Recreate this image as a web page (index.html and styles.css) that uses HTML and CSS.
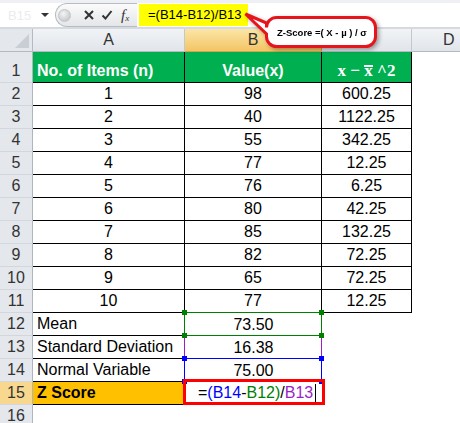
FILE: index.html
```html
<!DOCTYPE html>
<html lang="en">
  <head>
    <title>Z Score</title>
    <meta name="viewport" content="width=device-width, initial-scale=1.0">
    <link rel="stylesheet" href="styles.css">
  </head>
  <body>
    <div class="formula-bar">
      <div class="name-box"><span class="name">B15</span><span class="drop"></span></div>
      <div class="buttons">
        <span class="knob"></span>
        <svg class="icon" viewBox="0 0 12 12"><path d="M2 2L10 10M10 2L2 10" /></svg>
        <svg class="icon" viewBox="0 0 12 12"><path d="M1.5 6.5L4.5 9.5L10.5 2" /></svg>
        <span class="fx">f<sub>x</sub></span>
      </div>
      <div class="formula">=(B14-B12)/B13</div>
      <div class="rest"></div>
    </div>
    <div class="band"></div>

    <div class="sheet">
      <div class="corner"></div>
      <div class="col">A</div>
      <div class="col sel">B</div>
      <div class="col"></div>
      <div class="col last">D</div>

      <div class="rh">1</div>
      <div class="c head left">No. of Items (n)</div>
      <div class="c head">Value(x)</div>
      <div class="c head math">x &minus; <span class="bar">x</span> ^2</div>
      <div class="e"></div>

      <div class="rh">2</div><div class="c">1</div><div class="c">98</div><div class="c">600.25</div><div class="e"></div>
      <div class="rh">3</div><div class="c">2</div><div class="c">40</div><div class="c">1122.25</div><div class="e"></div>
      <div class="rh">4</div><div class="c">3</div><div class="c">55</div><div class="c">342.25</div><div class="e"></div>
      <div class="rh">5</div><div class="c">4</div><div class="c">77</div><div class="c">12.25</div><div class="e"></div>
      <div class="rh">6</div><div class="c">5</div><div class="c">76</div><div class="c">6.25</div><div class="e"></div>
      <div class="rh">7</div><div class="c">6</div><div class="c">80</div><div class="c">42.25</div><div class="e"></div>
      <div class="rh">8</div><div class="c">7</div><div class="c">85</div><div class="c">132.25</div><div class="e"></div>
      <div class="rh">9</div><div class="c">8</div><div class="c">82</div><div class="c">72.25</div><div class="e"></div>
      <div class="rh">10</div><div class="c">9</div><div class="c">65</div><div class="c">72.25</div><div class="e"></div>
      <div class="rh">11</div><div class="c">10</div><div class="c">77</div><div class="c">12.25</div><div class="e"></div>

      <div class="rh">12</div><div class="c left">Mean</div><div class="c ref green">73.50</div><div class="e"></div><div class="e"></div>
      <div class="rh">13</div><div class="c left">Standard Deviation</div><div class="c ref purple">16.38</div><div class="e"></div><div class="e"></div>
      <div class="rh">14</div><div class="c left">Normal Variable</div><div class="c ref blue">75.00</div><div class="e"></div><div class="e"></div>
      <div class="rh sel">15</div>
      <div class="c left gold">Z Score</div>
      <div class="c edit">=<span class="t-blue">(B14</span>-<span class="t-green">B12)</span>/<span class="t-purple">B13</span><span class="cursor"></span></div>
      <div class="e"></div><div class="e"></div>
      <div class="rh">16</div><div class="e"></div><div class="e"></div><div class="e"></div><div class="e"></div>
    </div>

    <div class="callout">
      <svg width="140" height="44" viewBox="0 0 140 44">
        <path d="M32.5 5.5H121.5A10 10 0 0 1 131.5 15.5V24.5A10 10 0 0 1 121.5 34.5H32.5A10 10 0 0 1 22.5 24.5V22L1.5 2L22.5 11V15.5A10 10 0 0 1 32.5 5.5Z" />
        <text x="33" y="24">Z-Score =( X - µ ) / σ</text>
      </svg>
    </div>
  </body>
</html>
```

FILE: styles.css
```css
body {
  margin: 0;
  width: 460px;
  height: 423px;
  overflow: hidden;
  position: relative;
  background: #fff;
  font-family: "Liberation Sans", Arial, sans-serif;
}

/* formula bar */
.formula-bar {
  display: flex;
  height: 27px;
  box-sizing: border-box;
  border-top: 3px solid #eef0f3;
  background: #fff;
}
.name-box {
  width: 55px;
  display: flex;
  align-items: center;
  justify-content: space-between;
  padding: 0 6px 0 8px;
  box-sizing: border-box;
}
.name {
  color: #ececec;
  font-size: 13px;
}
.drop {
  width: 0;
  height: 0;
  border-left: 4px solid transparent;
  border-right: 4px solid transparent;
  border-top: 4px solid #333;
}
.buttons {
  width: 82px;
  display: flex;
  align-items: center;
  box-sizing: border-box;
  border: 1px solid #b7bcc3;
  border-right: none;
  border-radius: 12px 0 0 12px;
  background: linear-gradient(#fbfbfb, #e4e6e9);
}
.knob {
  width: 11px;
  height: 11px;
  margin-left: 2px;
  border-radius: 50%;
  background: radial-gradient(circle at 40% 35%, #f4f4f4, #b9bcc0);
  border: 1px solid #c3c6ca;
}
.icon {
  width: 12px;
  height: 12px;
  margin-left: 12px;
  fill: none;
  stroke: #333;
  stroke-width: 2;
}
.icon + .icon {
  margin-left: 6px;
}
.fx {
  margin-left: 8px;
  font-family: "Liberation Serif", serif;
  font-style: italic;
  font-size: 15px;
  color: #333;
}
.fx sub {
  font-size: 9px;
  vertical-align: -1px;
}
.formula {
  width: 109px;
  margin: 1px 0 1px 2px;
  background: #ffff00;
  font-size: 13px;
  line-height: 22px;
  padding-left: 9px;
  box-sizing: border-box;
  color: #000;
}
.rest {
  flex: 1;
}
.band {
  height: 2px;
  background: #d5dae1;
}

/* sheet grid */
.sheet {
  display: grid;
  grid-template-columns: 33px 152px 137px 90px 48px;
  grid-template-rows: 23px 31px repeat(15, 23px);
  font-size: 16px;
}
.corner, .col, .rh {
  box-sizing: border-box;
  background: #e4e7ec;
  color: #333;
}
.corner {
  border-right: 1px solid #b4bac4;
  border-bottom: 1px solid #b4bac4;
  position: relative;
}
.corner::after {
  content: "";
  position: absolute;
  right: 3px;
  bottom: 3px;
  border-left: 14px solid transparent;
  border-bottom: 14px solid #c9cdd4;
}
.col {
  display: flex;
  align-items: center;
  justify-content: center;
  background: linear-gradient(#f1f3f6, #e1e5ea);
  border-right: 1px solid #c3c8cf;
  border-bottom: 1px solid #b4bac4;
}
.col.last {
  justify-content: flex-start;
  padding-left: 31px;
  border-right: none;
}
.col.sel {
  background: linear-gradient(#fbe6a6, #f3c566);
  border-right-color: #d6a548;
  border-bottom-color: #d6a548;
}
.rh {
  display: flex;
  align-items: flex-end;
  justify-content: center;
  padding-bottom: 2px;
  line-height: 18px;
  border-right: 1px solid #aeb5bf;
  border-bottom: 1px solid #d3d7dd;
}
.rh.sel {
  background: #f8d88f;
}
.c {
  box-sizing: border-box;
  display: flex;
  align-items: flex-end;
  justify-content: center;
  padding-bottom: 2px;
  line-height: 18px;
  border-right: 1px solid #000;
  border-bottom: 1px solid #000;
  color: #000;
  white-space: pre;
}
.left {
  justify-content: flex-start;
  padding-left: 4px;
}
.head {
  background: #00b050;
  color: #fff;
  font-weight: bold;
}
.math {
  font-family: "Liberation Serif", serif;
  font-size: 17px;
}
.bar {
  position: relative;
}
.bar::before {
  content: "";
  position: absolute;
  left: 0;
  right: 0;
  top: 3px;
  border-top: 2px solid #fff;
}
.gold {
  background: #ffc000;
  font-weight: bold;
}
.e {
  background: #fff;
}

/* referenced cells while editing */
.ref {
  position: relative;
  border-right: none;
  border-bottom: none;
}
.ref::before {
  content: "";
  position: absolute;
  top: -1px;
  left: -1px;
  right: 0;
  bottom: 0;
  border: 1px solid var(--ref);
}
.ref::after {
  content: "";
  position: absolute;
  top: -3px;
  left: -3px;
  width: 5px;
  height: 5px;
  background: var(--ref);
  box-shadow: 137px 0 0 var(--ref), 0 23px 0 var(--ref), 137px 23px 0 var(--ref);
}
.green {
  --ref: #008000;
  z-index: 2;
}
.purple {
  --ref: #9b1fc9;
}
.blue {
  --ref: #0000ff;
  z-index: 1;
}
.edit {
  position: relative;
  justify-content: flex-start;
  padding-left: 13px;
  border-right: none;
  z-index: 3;
}
.edit::before {
  content: "";
  position: absolute;
  top: -3px;
  left: -2px;
  right: -3px;
  bottom: -1px;
  border: 3px solid #ff0000;
}
.t-blue { color: #0000ff; }
.t-green { color: #008000; }
.t-purple { color: #9b1fc9; }
.cursor {
  width: 1px;
  height: 18px;
  margin-left: 2px;
  background: #000;
}

/* callout over the sheet */
.callout {
  position: absolute;
  left: 244px;
  top: 12px;
  filter: drop-shadow(2px 2px 2px rgba(0, 0, 0, 0.35));
}
.callout path {
  fill: #fff;
  stroke: #e8141b;
  stroke-width: 3;
}
.callout text {
  font-family: "Liberation Sans", Arial, sans-serif;
  font-weight: bold;
  font-size: 9.5px;
  fill: #000;
}
```
